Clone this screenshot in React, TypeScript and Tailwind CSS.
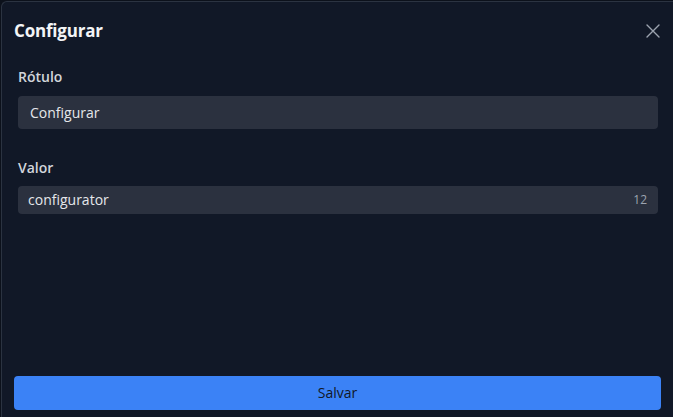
import { useState } from "react";

const font = { fontFamily: '"Segoe UI", "Open Sans", sans-serif' };

export default function App() {
  const [label, setLabel] = useState("Configurar");
  const [value, setValue] = useState("configurator");

  return (
    <div className="w-[673px] h-[417px] overflow-hidden bg-[#0c111b] pt-px pl-px" style={font}>
      <div className="h-full flex flex-col bg-[#111827] border-t border-l border-[#2b3341] rounded-tl-md">
        {/* Header */}
        <div className="flex items-center justify-between pl-3 pr-[13px] pt-[14px] h-[44px]">
          <h2 className="text-[17px] leading-7 font-bold tracking-[-0.2px] text-[#f3f4f6]">Configurar</h2>
          <button className="text-[#9ca3af] hover:text-white">
            <svg width="14" height="14" viewBox="0 0 14 14" fill="none" stroke="currentColor" strokeWidth="1.4" strokeLinecap="round">
              <path d="M1 1l12 12M13 1L1 13" />
            </svg>
          </button>
        </div>

        {/* Body */}
        <div className="flex-1 flex flex-col pl-4 pr-[15px] pt-[21px]">
          <label className="text-sm leading-5 font-semibold text-[#d1d5db] mb-[9px]">Rótulo</label>
          <input
            value={label}
            onChange={(e) => setLabel(e.target.value)}
            className="h-[33px] rounded bg-[#2b313f] px-3 text-sm text-[#e5e7eb] outline-none"
          />

          <label className="text-sm leading-5 font-semibold text-[#d1d5db] mt-[29px] mb-2">Valor</label>
          <div className="h-[28px] rounded bg-[#2b313f] flex items-center pl-[10px] pr-[11px]">
            <input
              value={value}
              onChange={(e) => setValue(e.target.value)}
              className="flex-1 bg-transparent text-sm text-[#e5e7eb] outline-none"
            />
            <span className="text-xs text-[#9ca3af]">{value.length}</span>
          </div>
        </div>

        {/* Footer */}
        <div className="pl-3 pr-3 pb-[7px]">
          <button className="w-full h-[34px] rounded bg-[#3b82f6] text-sm text-[#111827] hover:bg-blue-600">
            Salvar
          </button>
        </div>
      </div>
    </div>
  );
}
